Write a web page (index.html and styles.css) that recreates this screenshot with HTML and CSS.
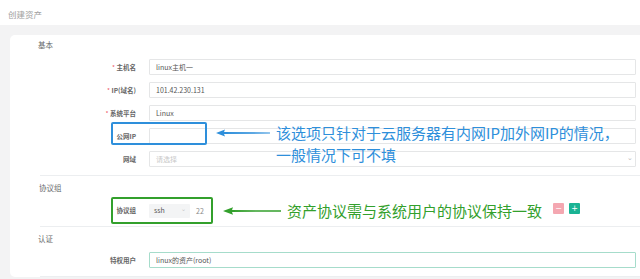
FILE: index.html
```html
<!DOCTYPE html>
<html lang="zh">
<head>
<meta charset="utf-8">
<link rel="stylesheet" href="styles.css">
</head>
<body>
<div class="header">创建资产</div>
<div class="panel">
  <div class="sec-title sec-first">基本</div>
  <div class="row"><div class="label"><span class="req">*</span> 主机名</div><div class="input">linux主机一</div></div>
  <div class="row"><div class="label"><span class="req">*</span> IP(域名)</div><div class="input">101.42.230.131</div></div>
  <div class="row"><div class="label"><span class="req">*</span> 系统平台</div><div class="input">Linux</div></div>
  <div class="row">
    <div class="label">公网IP</div><div class="input"></div>
    <div class="box box-blue"></div>
    <svg class="arrow arrow-blue" width="54" height="8" viewBox="0 0 54 8"><path d="M0 4 L9 0.5 L8 3 L54 3.4 L54 4.6 L8 5 L9 7.5 Z" fill="#2e8fdb"/></svg>
    <div class="note note-blue">该选项只针对于云服务器有内网IP加外网IP的情况，<br>一般情况下可不填</div>
  </div>
  <div class="row"><div class="label">网域</div><div class="input input-select placeholder">请选择<span class="caret">⌄</span></div></div>
  <div class="divider div1"></div>
  <div class="sec-title sec-proto">协议组</div>
  <div class="row row-proto">
    <div class="label label-proto">协议组</div>
    <div class="proto-fields">
      <div class="proto-select">ssh<span class="caret-s">⌄</span></div>
      <div class="proto-port">22</div>
    </div>
    <div class="box box-green"></div>
    <svg class="arrow arrow-green" width="58" height="8" viewBox="0 0 58 8"><path d="M0 4 L10 0.3 L9 3 L58 3.3 L58 4.7 L9 5 L10 7.7 Z" fill="#33a02c"/></svg>
    <div class="note note-green">资产协议需与系统用户的协议保持一致</div>
    <div class="btn btn-minus">−</div>
    <div class="btn btn-plus">+</div>
  </div>
  <div class="divider div2"></div>
  <div class="sec-title sec-auth">认证</div>
  <div class="row row-auth"><div class="label">特权用户</div><div class="input input-focus">linux的资产(root)</div></div>
  <div class="divider div3"></div>
</div>
</body>
</html>
```

FILE: styles.css
```css
* { box-sizing: border-box; }
html, body { margin: 0; padding: 0; }
body {
  width: 640px;
  height: 279px;
  overflow: hidden;
  background: #f3f3f4;
  font-family: "Noto Sans CJK SC", "Noto Sans", sans-serif;
  color: #676a6c;
}
.header {
  height: 25px;
  background: #fff;
  padding-left: 8px;
  font-size: 8.5px;
  line-height: 28px;
  color: #a0a0a0;
}
.panel {
  margin: 10px 0 0 10px;
  background: #fff;
  border-radius: 5px 0 0 5px;
  height: 242px;
  position: relative;
}
.sec-title {
  padding-left: 28px;
  font-size: 7.5px;
  color: #676a6c;
}
.sec-first { height: 20px; line-height: 20px; }
.sec-proto { height: 22px; line-height: 24px; padding-left: 29px; }
.sec-auth { height: 24px; line-height: 24px; }
.row {
  position: relative;
  display: grid;
  grid-template-columns: 126px 1fr;
  column-gap: 13px;
  align-items: center;
  height: 23px;
  padding-right: 4px;
}
.label {
  text-align: right;
  font-size: 6.5px;
  font-weight: 600;
  color: #666;
  white-space: nowrap;
}
.req { color: #ed5565; font-weight: normal; }
.input {
  height: 16px;
  border: 1px solid #e5e6e7;
  border-radius: 1px;
  padding-left: 6px;
  font-size: 7px;
  line-height: 14px;
  color: #555;
  background: #fff;
  position: relative;
}
.placeholder { color: #c8c8c8; }
.caret {
  position: absolute;
  right: 2px;
  top: -2px;
  font-size: 7px;
  color: #bbb;
}
.divider {
  height: 1px;
  background: #eceef0;
  margin-left: 30px;
}
.div1 { margin-top: 5px; }
.div2 { margin-top: 2px; }
.div3 { margin-top: 8px; }
.row-proto { height: 26px; }
.label-proto { align-self: start; padding-top: 7px; }
.proto-fields { display: flex; align-items: center; }
.proto-select {
  width: 41px;
  height: 14px;
  background: #f3f4f5;
  border-radius: 1px;
  padding-left: 5px;
  font-size: 7px;
  line-height: 13px;
  color: #555;
  position: relative;
}
.caret-s {
  position: absolute;
  right: 4px;
  top: -2px;
  color: #c5c5c5;
  font-size: 6px;
}
.proto-port {
  margin-left: 6px;
  font-size: 7px;
  color: #888;
}
.row-auth { height: 17px; }
.input-focus { border-color: #a6dccb; }
.box {
  position: absolute;
  border-radius: 2px;
  z-index: 2;
}
.box-blue {
  left: 101px;
  top: -2px;
  width: 96px;
  height: 23px;
  border: 2px solid #2e8fdb;
}
.box-green {
  left: 101px;
  top: -1px;
  width: 102px;
  height: 27px;
  border: 2px solid #33a02c;
}
.arrow { position: absolute; z-index: 2; }
.arrow-blue { left: 206px; top: 5px; }
.arrow-green { left: 213px; top: 9px; }
.note {
  position: absolute;
  z-index: 3;
  font-size: 15px;
  white-space: nowrap;
}
.note-blue {
  left: 266px;
  top: -2px;
  line-height: 22px;
  color: #2e8fdb;
}
.note-green {
  left: 277px;
  top: 3px;
  line-height: 20px;
  color: #33a02c;
}
.btn {
  position: absolute;
  top: 5px;
  width: 11px;
  height: 11px;
  border-radius: 1px;
  color: #fff;
  font-size: 8px;
  line-height: 11px;
  text-align: center;
  font-family: "DejaVu Sans", sans-serif;
}
.btn-minus { left: 543px; background: #f4a7b1; }
.btn-plus { left: 559px; background: #1ab394; }
```
